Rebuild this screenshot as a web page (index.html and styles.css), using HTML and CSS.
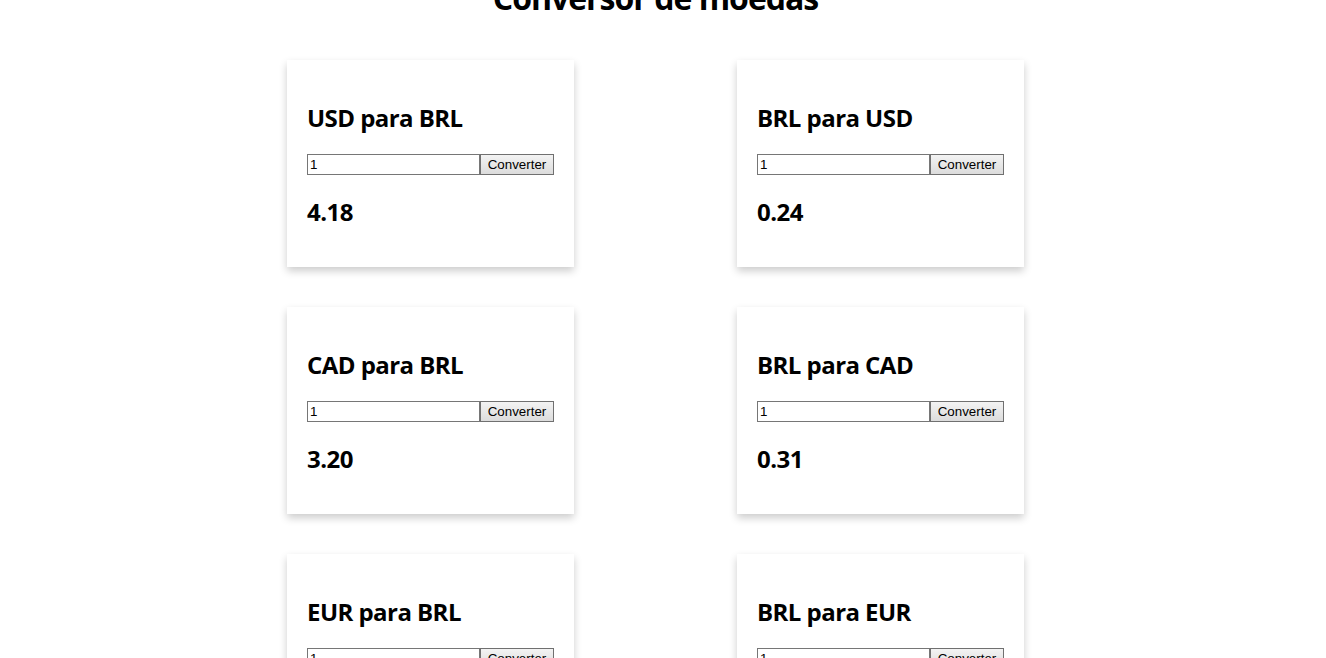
FILE: index.html
```html
<!DOCTYPE html>
<html lang="pt-BR">
<head>
<meta charset="utf-8">
<title>Conversor de moedas</title>
<link rel="stylesheet" href="styles.css">
</head>
<body>
<div class="page">
  <h1 class="title">Conversor de moedas</h1>
  <div class="grid">
    <div class="card">
      <h2 class="card-title">USD para BRL</h2>
      <div class="row"><input class="amount" type="text" value="1"><button class="btn">Converter</button></div>
      <h2 class="result">4.18</h2>
    </div>
    <div class="card">
      <h2 class="card-title">BRL para USD</h2>
      <div class="row"><input class="amount" type="text" value="1"><button class="btn">Converter</button></div>
      <h2 class="result">0.24</h2>
    </div>
    <div class="card">
      <h2 class="card-title">CAD para BRL</h2>
      <div class="row"><input class="amount" type="text" value="1"><button class="btn">Converter</button></div>
      <h2 class="result">3.20</h2>
    </div>
    <div class="card">
      <h2 class="card-title">BRL para CAD</h2>
      <div class="row"><input class="amount" type="text" value="1"><button class="btn">Converter</button></div>
      <h2 class="result">0.31</h2>
    </div>
    <div class="card">
      <h2 class="card-title">EUR para BRL</h2>
      <div class="row"><input class="amount" type="text" value="1"><button class="btn">Converter</button></div>
      <h2 class="result">4.55</h2>
    </div>
    <div class="card">
      <h2 class="card-title">BRL para EUR</h2>
      <div class="row"><input class="amount" type="text" value="1"><button class="btn">Converter</button></div>
      <h2 class="result">0.22</h2>
    </div>
  </div>
</div>
</body>
</html>
```

FILE: styles.css
```css
html, body {
  margin: 0;
  padding: 0;
  background: #ffffff;
  overflow: hidden;
}

body {
  font-family: "Open Sans", "Noto Sans", sans-serif;
  color: #000;
}

.page {
  width: 1311px;
  margin-top: -24px;
}

.title {
  margin: 0 0 41px 0;
  text-align: center;
  font-size: 32px;
  line-height: 43px;
  font-weight: 700;
  letter-spacing: -1px;
}

.grid {
  display: grid;
  grid-template-columns: 287px 287px;
  column-gap: 163px;
  row-gap: 40px;
  justify-content: center;
}

.card {
  background: #fff;
  padding: 22px 20px 19px 20px;
  box-shadow: 0 4px 8px 0 rgba(0, 0, 0, 0.2);
}

.card-title,
.result {
  margin: 20px 0;
  font-size: 24px;
  line-height: 32px;
  font-weight: 700;
  letter-spacing: -0.55px;
}

.result {
  margin-top: 21px;
}

.row {
  display: flex;
  height: 21px;
}

.amount {
  box-sizing: border-box;
  width: 173px;
  height: 21px;
  margin: 0;
  padding: 1px 2px;
  border: 1px solid #767676;
  font-family: "Liberation Sans", Arial, sans-serif;
  font-size: 13.333px;
  color: #000;
  background: #fff;
}

.btn {
  box-sizing: border-box;
  width: 74px;
  height: 21px;
  margin: 0;
  padding: 1px 6px;
  border: 1px solid #707070;
  border-radius: 0;
  background: linear-gradient(#f3f3f3, #dcdcdc);
  font-family: "Liberation Sans", Arial, sans-serif;
  font-size: 13.333px;
  color: #000;
}
```
